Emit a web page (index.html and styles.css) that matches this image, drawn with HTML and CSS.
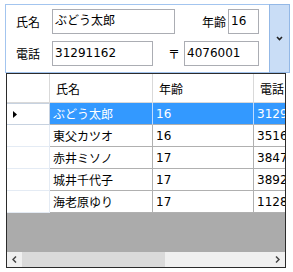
FILE: index.html
```html
<!DOCTYPE html>
<html lang="ja">
<head>
  <meta charset="UTF-8">
  <title>顧客一覧</title>
  <link rel="stylesheet" href="styles.css">
</head>
<body>
  <div class="app">
    <!-- Detail panel for the selected record -->
    <div class="form">
      <div class="fields">
        <div class="field-row">
          <span class="label">氏名</span>
          <span class="box name">ぶどう太郎</span>
          <span class="label age-label">年齢</span>
          <span class="box age">16</span>
        </div>
        <div class="field-row second">
          <span class="label">電話</span>
          <span class="box tel">31291162</span>
          <span class="label zip-label">〒</span>
          <span class="box zip">4076001</span>
        </div>
      </div>
      <div class="toggle">
        <svg width="7" height="5" viewBox="0 0 7 5">
          <polyline points="1,1 3.5,3.5 6,1" fill="none" stroke="#222" stroke-width="1.6"/>
        </svg>
      </div>
    </div>

    <!-- Data grid -->
    <div class="grid">
      <div class="view">
        <div class="grow head">
          <div class="rh"></div>
          <div class="cell">氏名</div>
          <div class="cell">年齢</div>
          <div class="cell">電話</div>
        </div>
        <div class="grow selected">
          <div class="rh">
            <svg width="4" height="7" viewBox="0 0 4 7"><polygon points="0,0 4,3.5 0,7" fill="#000"/></svg>
          </div>
          <div class="cell">ぶどう太郎</div>
          <div class="cell">16</div>
          <div class="cell">31291162</div>
        </div>
        <div class="grow">
          <div class="rh"></div>
          <div class="cell">東父カツオ</div>
          <div class="cell">16</div>
          <div class="cell">35160000</div>
        </div>
        <div class="grow">
          <div class="rh"></div>
          <div class="cell">赤井ミソノ</div>
          <div class="cell">17</div>
          <div class="cell">38470000</div>
        </div>
        <div class="grow">
          <div class="rh"></div>
          <div class="cell">城井千代子</div>
          <div class="cell">17</div>
          <div class="cell">38920000</div>
        </div>
        <div class="grow">
          <div class="rh"></div>
          <div class="cell">海老原ゆり</div>
          <div class="cell">17</div>
          <div class="cell">11280000</div>
        </div>
      </div>
      <div class="blank"></div>
      <div class="hscroll">
        <div class="arrow">
          <svg width="5" height="7" viewBox="0 0 5 7"><polyline points="4,0.5 1,3.5 4,6.5" fill="none" stroke="#444" stroke-width="1.5"/></svg>
        </div>
        <div class="thumb"></div>
        <div class="track"></div>
        <div class="arrow">
          <svg width="5" height="7" viewBox="0 0 5 7"><polyline points="1,0.5 4,3.5 1,6.5" fill="none" stroke="#444" stroke-width="1.5"/></svg>
        </div>
      </div>
    </div>
  </div>
</body>
</html>
```

FILE: styles.css
```css
* { box-sizing: border-box; margin: 0; padding: 0; }
html, body {
  background: #fff;
  font-family: "DejaVu Sans", "Noto Sans CJK JP", sans-serif;
  font-size: 12px;
  color: #000;
}

.app {
  padding: 4px 0 0 5px;
  width: 290px;
}

/* Detail panel */
.form {
  display: flex;
  height: 69px;
}
.fields {
  width: 264px;
  border: 1px solid #a3c5ef;
  border-right: none;
  padding: 4px 0 0 10px;
}
.field-row {
  display: flex;
  align-items: center;
  height: 25px;
}
.field-row.second { margin-top: 7px; }
.label {
  width: 36px;
  font-family: "Noto Sans CJK JP", sans-serif;
}
.age-label {
  width: 53px;
  text-align: right;
  padding-right: 2px;
}
.zip-label {
  width: 31px;
  text-align: right;
  padding-right: 4px;
}
.box {
  height: 25px;
  border: 1px solid #abadb3;
  padding: 0 2px;
  line-height: 23px;
  white-space: nowrap;
  overflow: hidden;
}
.name { width: 123px; }
.age { width: 31px; }
.tel { width: 101px; }
.zip { width: 75px; }

.toggle {
  width: 21px;
  background: #c9ddf6;
  border: 1px solid #93b8e6;
  display: flex;
  align-items: center;
  justify-content: center;
}

/* Data grid */
.grid {
  margin-left: 1px;
  width: 280px;
  height: 195px;
  border: 1px solid #2b2b2b;
  display: flex;
  flex-direction: column;
}
.view {
  height: 139px;
  overflow: hidden;
}
.grow {
  display: grid;
  grid-template-columns: 43px 103px 101px 100px;
  width: 347px;
  height: 22px;
}
.grow.head { height: 29px; }
.cell, .rh {
  border-right: 1px solid #b0b0b0;
  border-bottom: 1px solid #b0b0b0;
  padding-left: 3px;
  display: flex;
  align-items: center;
  white-space: nowrap;
  overflow: hidden;
}
.rh {
  border-color: #e4ebf4;
  padding-left: 6px;
}
.head .cell, .head .rh {
  border-color: #d9d9d9;
}
.head .cell { padding-left: 6px; }
.selected .cell {
  background: #3399ff;
  color: #fff;
  border-right-color: #bfdcff;
}
.selected .rh {
  border: 1px solid #c7d2e0;
  border-left: none;
}

.blank {
  height: 39px;
  background: #ababab;
}
.hscroll {
  height: 15px;
  display: flex;
  background: #f0f0f0;
}
.arrow {
  width: 15px;
  display: flex;
  align-items: center;
  justify-content: center;
}
.thumb {
  width: 143px;
  background: #dadada;
}
.track { flex: 1; }
```
